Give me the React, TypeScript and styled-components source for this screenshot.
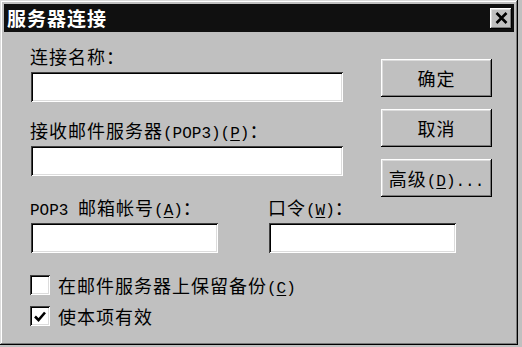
import React from 'react';
import styled, { createGlobalStyle } from 'styled-components';

const GlobalStyle = createGlobalStyle`
    html, body {
        margin: 0;
        padding: 0;
        background: #c0c0c0;
    }

    body {
        font-family: "Noto Sans CJK SC", sans-serif;
        color: #000;
    }
`;

const Window = styled.div`
    background: #c0c0c0;
    box-shadow:
        inset -1px -1px #000,
        inset 1px 1px #dcdcdc,
        inset -2px -2px #7b7b7b,
        inset 2px 2px #fff;
    box-sizing: border-box;
    display: flex;
    flex-direction: column;
    height: 345px;
    padding: 4px;
    width: 518px;
`;

const TitleBar = styled.div`
    align-items: center;
    background: #101010;
    display: flex;
    height: 28px;
    justify-content: space-between;
    padding: 0 2px 0 3px;
`;

const Title = styled.span`
    color: #fff;
    font-size: 19px;
    font-weight: 700;
    letter-spacing: 1px;
    line-height: 28px;
`;

const CloseButton = styled.button`
    align-items: center;
    background: #c0c0c0;
    border: none;
    box-shadow:
        inset -1px -1px #000,
        inset 1px 1px #fff,
        inset -2px -2px #7b7b7b,
        inset 2px 2px #dcdcdc;
    display: flex;
    height: 21px;
    justify-content: center;
    padding: 0;
    width: 22px;
`;

const Body = styled.div`
    display: flex;
    flex-direction: column;
    padding: 13px 0 0 26px;
`;

const TopSection = styled.div`
    align-items: flex-start;
    display: flex;
`;

const FieldColumn = styled.div`
    display: flex;
    flex-direction: column;
    gap: 17px;
    width: 312px;
`;

const Field = styled.div<{ $width?: number }>`
    display: flex;
    flex-direction: column;
    gap: 5px;
    width: ${({ $width }) => ($width ? `${$width}px` : 'auto')};
`;

const Label = styled.label`
    display: block;
    font-size: 18px;
    height: 22px;
    letter-spacing: 1px;
    line-height: 22px;
    white-space: nowrap;
`;

const Latin = styled.span`
    font-family: "Liberation Mono", monospace;
    font-size: 16px;
    letter-spacing: 0;
    line-height: 1;
`;

const Key = styled.span`
    text-decoration: underline;
    text-underline-offset: 2px;
`;

const Input = styled.input`
    background: #fff;
    border: none;
    box-shadow:
        inset 1px 1px #404040,
        inset -1px -1px #fff,
        inset 2px 2px #000,
        inset -2px -2px #dcdcdc;
    box-sizing: border-box;
    display: block;
    height: 30px;
    margin: 0 0 0 1px;
    outline: none;
    width: 100%;
`;

/* the buttons reach down beside the account labels, so they give back
   that overlap instead of pushing the next row down */
const ButtonColumn = styled.div`
    display: flex;
    flex-direction: column;
    gap: 12px;
    margin: 14px 0 -40px 39px;
`;

const PushButton = styled.button`
    background: #c0c0c0;
    border: none;
    box-shadow:
        inset -1px -1px #000,
        inset 1px 1px #fff,
        inset -2px -2px #7b7b7b,
        inset 2px 2px #dcdcdc;
    color: #000;
    font-family: "Noto Sans CJK SC", sans-serif;
    font-size: 18px;
    height: 38px;
    letter-spacing: 1px;
    line-height: 22px;
    padding: 0;
    width: 111px;
`;

const AccountRow = styled.div`
    display: flex;
    gap: 51px;
    margin-top: 20px;
`;

const Options = styled.div`
    display: flex;
    flex-direction: column;
    gap: 9px;
    margin-top: 21px;
`;

const CheckRow = styled.label`
    align-items: center;
    display: flex;
    font-size: 18px;
    gap: 8px;
    height: 22px;
    letter-spacing: 1px;
    line-height: 22px;
    white-space: nowrap;
`;

const Box = styled.span`
    align-items: center;
    background: #fff;
    box-shadow:
        inset 1px 1px #404040,
        inset -1px -1px #fff,
        inset 2px 2px #000,
        inset -2px -2px #dcdcdc;
    display: flex;
    flex: none;
    height: 20px;
    justify-content: center;
    width: 20px;
`;

const Check = () => (
    <svg width="12" height="11" viewBox="0 0 12 11">
        <path d="M1 5.5 L4.5 9 L11 1.5" fill="none" stroke="#000" strokeWidth="2.6" />
    </svg>
);

const CheckBox = ({ checked, children }: { checked?: boolean; children: React.ReactNode }) => (
    <CheckRow>
        <Box>{checked && <Check />}</Box>
        <span>{children}</span>
    </CheckRow>
);

export default function App() {
    return (
        <>
            <GlobalStyle />
            <Window>
                <TitleBar>
                    <Title>服务器连接</Title>
                    <CloseButton type="button" aria-label="关闭">
                        <svg width="13" height="12" viewBox="0 0 13 12">
                            <path d="M1.5 1 L11.5 11 M11.5 1 L1.5 11" stroke="#000" strokeWidth="2.6" />
                        </svg>
                    </CloseButton>
                </TitleBar>
                <Body>
                    <TopSection>
                        <FieldColumn>
                            <Field>
                                <Label>连接名称：</Label>
                                <Input />
                            </Field>
                            <Field>
                                <Label>
                                    接收邮件服务器<Latin>(POP3)(<Key>P</Key>)</Latin>：
                                </Label>
                                <Input />
                            </Field>
                        </FieldColumn>
                        <ButtonColumn>
                            <PushButton type="button">确定</PushButton>
                            <PushButton type="button">取消</PushButton>
                            <PushButton type="button">
                                高级<Latin>(<Key>D</Key>)...</Latin>
                            </PushButton>
                        </ButtonColumn>
                    </TopSection>
                    <AccountRow>
                        <Field $width={187}>
                            <Label>
                                <Latin>POP3 </Latin>邮箱帐号<Latin>(<Key>A</Key>)</Latin>：
                            </Label>
                            <Input />
                        </Field>
                        <Field $width={187}>
                            <Label>
                                口令<Latin>(<Key>W</Key>)</Latin>：
                            </Label>
                            <Input />
                        </Field>
                    </AccountRow>
                    <Options>
                        <CheckBox>
                            在邮件服务器上保留备份<Latin>(<Key>C</Key>)</Latin>
                        </CheckBox>
                        <CheckBox checked>使本项有效</CheckBox>
                    </Options>
                </Body>
            </Window>
        </>
    );
}
